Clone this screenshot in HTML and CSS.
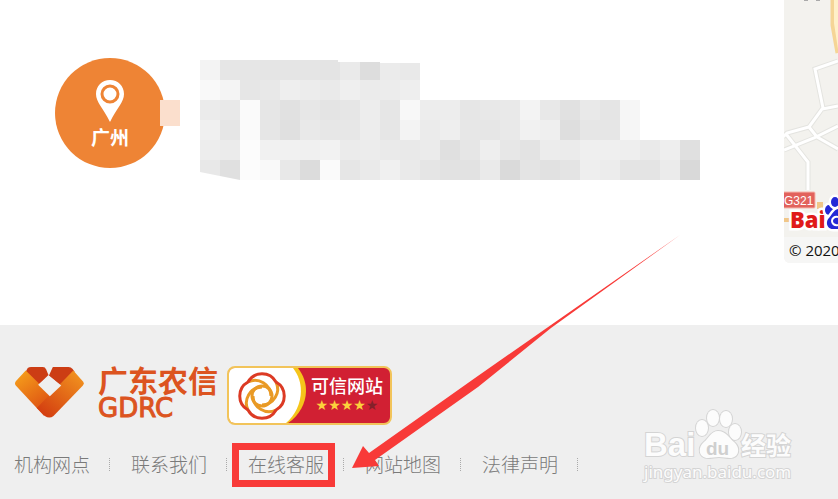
FILE: index.html
```html
<!DOCTYPE html>
<html lang="zh-CN">
<head>
    <meta charset="UTF-8">
    <meta name="viewport" content="width=device-width, initial-scale=1.0">
    <title>广东农信</title>
    <link rel="stylesheet" href="styles.css">
</head>
<body>
    <main class="branch">
        <div class="city">
            <svg class="city-pin" viewBox="0 0 28 42" aria-hidden="true">
                <path d="M14 0C6 0 0 6 0 14c0 8 7 14 14 28 7-14 14-20 14-28C28 6 22 0 14 0z" fill="#fff"/>
                <circle cx="14" cy="14" r="8" fill="#fff" stroke="#ee8435" stroke-width="3"/>
            </svg>
            <span>广州</span>
            <i class="city-tail"></i>
        </div>
        <svg class="mosaic" id="mosaic" viewBox="0 0 520 120" aria-hidden="true">
            <clipPath id="mosaicEdge">
                <path d="M0 0H138V2H180V3H220V40H520V120H40L0 112z"/>
            </clipPath>
            <g clip-path="url(#mosaicEdge)" shape-rendering="crispEdges"></g>
        </svg>
        <div class="map">
            <svg class="map-tile" viewBox="0 0 54 237" aria-hidden="true">
                <path d="M20 0h4M32 0h4" stroke="#aaa" stroke-width="2"/>
                <path d="M49-2v27l5 28" fill="none" stroke="#f5d596" stroke-width="5"/>
                <path d="M52-2v25l4 26" fill="none" stroke="#fff0c8" stroke-width="4"/>
                <g fill="none" stroke="#e4e4e0" stroke-width="5">
                    <path d="M54 61L31 69l8 39M54 106l-16 3-13 18-22 6-4 4M25 127l8 10M54 126l-24 12-30 12M2 134l22 28v28M33 137l21 12"/>
                </g>
                <g fill="none" stroke="#fff" stroke-width="3">
                    <path d="M54 61L31 69l8 39M54 106l-16 3-13 18-22 6-4 4M25 127l8 10M54 126l-24 12-30 12M2 134l22 28v28M33 137l21 12"/>
                </g>
                <path d="M0 222h8v-4H0zM33 202h6v7h-6z" fill="#f0c788"/>
                <rect x="-4" y="192" width="35" height="16" rx="1" fill="#e2625c" stroke="#f5b7ad"/>
                <text x="0" y="205" class="map-road">G321</text>
                <g class="map-logo">
                    <text x="6" y="228" class="map-bai">Bai</text>
                    <g fill="#2428d6" stroke="#fff" stroke-width="5" paint-order="stroke">
                        <ellipse cx="45" cy="210" rx="4" ry="5"/>
                        <ellipse cx="51" cy="202" rx="4" ry="5"/>
                        <path d="M55 209c-5 0-7 6-10 9-4 4-2 11 4 11h6z"/>
                    </g>
                    <path d="M54 217c-4-1-6 2-6 4s2 5 6 4" fill="none" stroke="#fff" stroke-width="2"/>
                </g>
            </svg>
            <p class="map-copy">© 2020</p>
        </div>
    </main>

    <footer class="footer">
        <div class="brands">
            <a href="#" class="logo">
                <svg class="logo-mark" viewBox="45 50 206 153" aria-hidden="true">
                    <defs>
                        <linearGradient id="gold" x1="0" y1="0" x2="0.6" y2="1">
                            <stop offset="0" stop-color="#f8a51c"/>
                            <stop offset="1" stop-color="#dc4d12"/>
                        </linearGradient>
                        <linearGradient id="flame" x1="1" y1="0" x2="0.2" y2="1">
                            <stop offset="0" stop-color="#f49a20"/>
                            <stop offset="1" stop-color="#d33d10"/>
                        </linearGradient>
                    </defs>
                    <path d="M83 55Q87 52 93 52H128Q135 52 138 59L145 76L115 105L77 66z" fill="#cc3d14"/>
                    <path d="M158 52H205Q212 52 217 58L223 66L183 109L146 78z" fill="#cc3d14"/>
                    <path d="M77 62L160 144L132 198Q128 194 48 108Q42 101 48 94z" fill="url(#gold)"/>
                    <path d="M219 62L248 95Q253 101 247 108L160 198Q148 208 134 198L110 174z" fill="url(#flame)"/>
                    <path d="M147 78L183 107L149 139L114 105z" fill="#efefef"/>
                </svg>
                <span class="logo-text">
                    <strong>广东农信</strong>
                    <span>GDRC</span>
                </span>
            </a>
            <a href="#" class="trust">
                <svg class="trust-mark" viewBox="0 0 78 55" aria-hidden="true">
                    <path d="M0 0H69C83 18 78 42 59 55H0z" fill="#f5c51b"/>
                    <path d="M0 0H64C78 18 72 42 57 55H0z" fill="#fff"/>
                    <g transform="translate(33 28)" fill="none" stroke-width="3">
                        <g stroke="#e99a25">
                            <path d="M14-14A16 16 0 0 1 0 9"/>
                            <path d="M14-14A16 16 0 0 1 0 9" transform="rotate(90)"/>
                            <path d="M14-14A16 16 0 0 1 0 9" transform="rotate(180)"/>
                            <path d="M14-14A16 16 0 0 1 0 9" transform="rotate(270)"/>
                            <circle r="10"/>
                        </g>
                        <path d="M-14-14A16 16 0 0 1 14-14A16 16 0 0 1 14 14A16 16 0 0 1-14 14A16 16 0 0 1-14-14z" stroke="#dc3a24"/>
                    </g>
                </svg>
                <span class="trust-text">
                    <span>可信网站</span>
                    <span class="stars">★★★★<i>★</i></span>
                </span>
            </a>
        </div>
        <nav class="links">
            <a href="#">机构网点</a>
            <a href="#">联系我们</a>
            <a href="#" class="marked">在线客服</a>
            <a href="#">网站地图</a>
            <a href="#">法律声明</a>
        </nav>
    </footer>

    <svg class="arrow" viewBox="0 0 330 236" aria-hidden="true">
        <path d="M329 0L200 90L124 143L18 218L12 211L1 233L28 231L24 225L127 152L200 93z" fill="#f83a38"/>
    </svg>

    <svg class="watermark" viewBox="0 0 160 84" role="img" aria-label="Baidu 经验">
        <g class="wm-shape">
            <text x="2" y="47" class="wm-bai">Bai</text>
            <ellipse cx="60" cy="19" rx="6" ry="8"/>
            <ellipse cx="71" cy="9" rx="6" ry="8"/>
            <ellipse cx="84" cy="10" rx="6" ry="8"/>
            <ellipse cx="93" cy="23" rx="6" ry="8"/>
            <path d="M76 22c-7 0-9 7-14 11-7 6-5 16 4 16 4 0 7-1 11-1s7 1 11 1c9 0 11-10 4-16-5-4-8-11-16-11z"/>
            <text x="99" y="46" class="wm-cn">经验</text>
            <text x="2" y="69" class="wm-url">jingyan.baidu.com</text>
        </g>
        <text x="64" y="46" class="wm-du">du</text>
    </svg>

    <script>
        // grey levels of the mosaic, one hex pair per 20px cell
        const rows = [
            'f3e6e6e5e5e5e4eaddebe9',
            'f9f4e6e8eeeceaefebecee',
            'ebe9fae6e1e7e4e6ede6f8edede6e8e9f3e8e1e9e5f6',
            'f0e6fae6e0e9e7e7ede6f3ebeee7e6e9f1efdee6e6f6',
            'edebfcf1f1f0f2ebeceae9ebe0e6eee7e3ecebefefeeeaeee0',
            'e8e0fcf9e8dcfae6eaf0eae5e2e2eadae4e1e4eeece4e4ebd9'
        ];
        const group = document.querySelector('#mosaic g');
        rows.forEach((row, y) => {
            row.match(/../g).forEach((level, x) => {
                const cell = document.createElementNS('http://www.w3.org/2000/svg', 'rect');
                cell.setAttribute('x', x * 20);
                cell.setAttribute('y', y * 20);
                cell.setAttribute('width', 20);
                cell.setAttribute('height', 20);
                cell.setAttribute('fill', '#' + level.repeat(3));
                group.appendChild(cell);
            });
        });
    </script>
</body>
</html>
```
FILE: styles.css
```css
* {
    margin: 0;
    padding: 0;
    box-sizing: border-box;
}

body {
    position: relative;
    display: flex;
    flex-direction: column;
    min-height: 100vh;
    overflow: hidden;
    background-color: #fff;
    font-family: "Noto Sans", "Noto Sans CJK SC", sans-serif;
}

a {
    color: inherit;
    text-decoration: none;
}

svg {
    display: block;
    flex-shrink: 0;
}

.branch {
    display: flex;
    align-items: flex-start;
    padding: 0 0 62px 55px;
}

.city {
    position: relative;
    display: flex;
    flex-direction: column;
    align-items: center;
    width: 110px;
    height: 110px;
    margin-top: 58px;
    padding-top: 22px;
    border-radius: 50%;
    background-color: #ee8435;
    color: #fff;
    font-family: "Noto Sans CJK SC", sans-serif;
    font-size: 19px;
    font-weight: 700;
    line-height: 30px;
}

.city-pin {
    width: 28px;
    height: 42px;
}

.city-tail {
    position: absolute;
    top: 42px;
    right: -15px;
    width: 20px;
    height: 26px;
    background-color: #fbdfcd;
}

.mosaic {
    width: 520px;
    height: 120px;
    margin: 60px 0 0 35px;
}

.map {
    width: 54px;
    margin-left: auto;
    overflow: hidden;
    border-radius: 0 0 0 6px;
    background-color: #f3f2ee;
}

.map-tile {
    width: 54px;
    height: 237px;
}

.map-road {
    fill: #fff;
    font: 12px "Liberation Sans", sans-serif;
}

.map-bai {
    fill: #e01a1a;
    stroke: #fff;
    stroke-width: 5px;
    paint-order: stroke;
    font: 800 22px "Open Sans", sans-serif;
}

.map-copy {
    padding-left: 5px;
    background-color: #f6f6f5;
    color: #111;
    font-family: "Open Sans", sans-serif;
    font-size: 15px;
    line-height: 26px;
    white-space: nowrap;
}

.footer {
    flex: 1;
    padding: 41px 14px 20px;
    background-color: #efefef;
}

.brands {
    display: flex;
    align-items: flex-start;
    gap: 9px;
}

.logo {
    display: flex;
    gap: 14px;
    padding-left: 1px;
    color: #dc5420;
}

.logo-mark {
    width: 69px;
    height: 52px;
}

.logo-text {
    display: flex;
    flex-direction: column;
}

.logo-text strong {
    font-family: "Noto Sans CJK SC", sans-serif;
    font-size: 30px;
    line-height: 26px;
}

.logo-text span {
    font-family: "DejaVu Sans", sans-serif;
    font-size: 26px;
    line-height: 32px;
    -webkit-text-stroke: 1px #dc5420;
}

.trust {
    display: flex;
    overflow: hidden;
    border: 2px solid #f2c45a;
    border-radius: 8px;
    background-color: #d12033;
}

.trust-mark {
    width: 78px;
    height: 55px;
}

.trust-text {
    display: flex;
    flex-direction: column;
    align-items: center;
    padding: 5px 7px 0 4px;
    color: #fff;
    font-family: "Noto Sans CJK SC", sans-serif;
    font-size: 18px;
    font-weight: 500;
    line-height: 24px;
}

.stars {
    color: #fbd13c;
    font-family: "DejaVu Sans", sans-serif;
    font-size: 14px;
    line-height: 16px;
}

.stars i {
    color: #84202a;
    font-style: normal;
}

.links {
    display: flex;
    gap: 41px;
    margin-top: 24px;
    color: #7a7a7a;
    font-family: "Noto Sans CJK SC", sans-serif;
    font-size: 19px;
    font-weight: 300;
    line-height: 30px;
    white-space: nowrap;
}

.links a {
    position: relative;
}

/* dotted divider after each link */
.links a::after {
    content: '';
    position: absolute;
    top: 9px;
    right: -20px;
    height: 13px;
    border-left: 1px dotted #aaa;
}

.marked::before {
    content: '';
    position: absolute;
    inset: -6px -11px -8px -16px;
    border: 7px solid #f83a38;
}

.arrow {
    position: absolute;
    top: 235px;
    left: 351px;
    width: 330px;
    height: 236px;
}

.watermark {
    position: absolute;
    right: 36px;
    bottom: 6px;
    width: 160px;
    height: 84px;
}

.wm-shape {
    fill: #fcfcfc;
    stroke: #d4d4d4;
    stroke-width: 2px;
    paint-order: stroke;
}

.wm-bai {
    font: 700 33px "Liberation Sans", sans-serif;
}

.wm-cn {
    font: 700 25px "Noto Sans CJK SC", sans-serif;
}

.wm-url {
    font: 17px "Noto Sans", sans-serif;
}

.wm-du {
    fill: #cfcfcf;
    font: 700 19px "Liberation Sans", sans-serif;
}
```
